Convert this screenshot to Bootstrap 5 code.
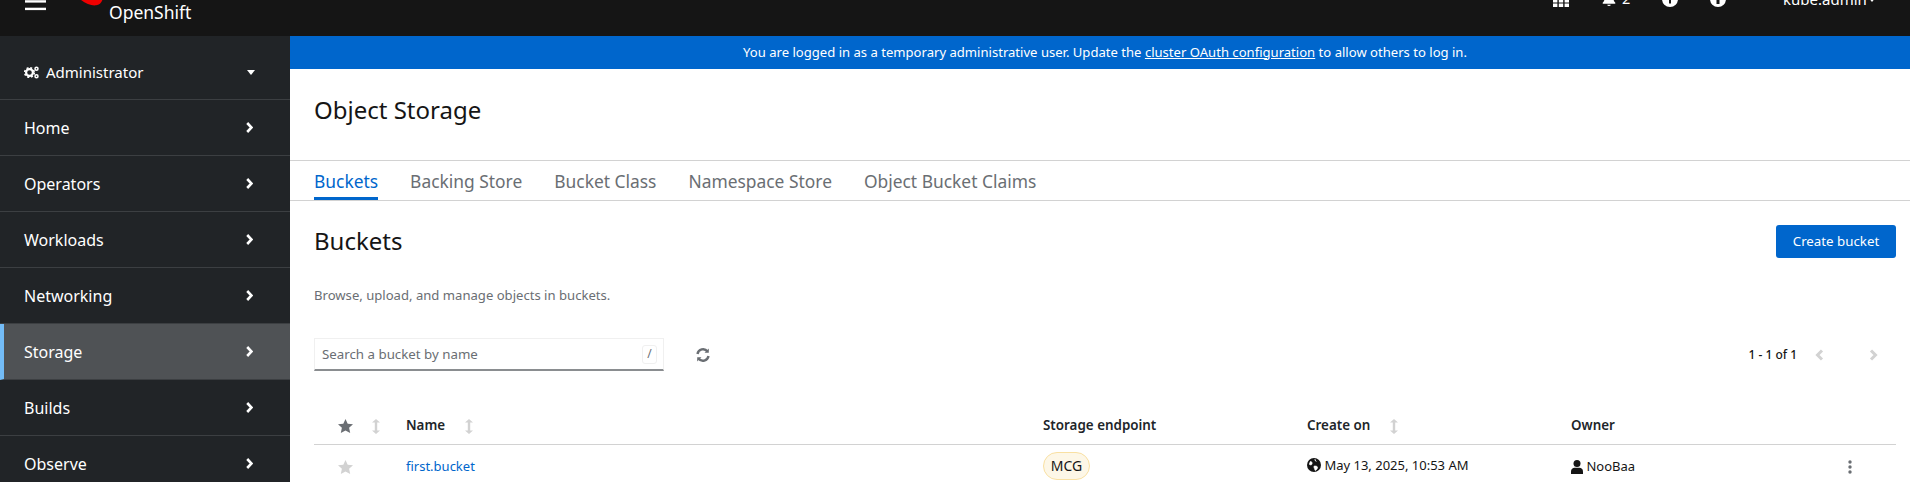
<!DOCTYPE html>
<html lang="en"><head><meta charset="utf-8"><title>Object Storage</title>
<link href="https://cdn.jsdelivr.net/npm/bootstrap@5.3.0/dist/css/bootstrap.min.css" rel="stylesheet">
<style>
html,body{height:482px;overflow:hidden}
body{font-family:"Noto Sans","Open Sans",sans-serif;font-size:14px;color:#151515;background:#fff}
.mast{height:36px;background:#151515;overflow:hidden;color:#fff}
.mast-in{height:76px;margin-top:-39px;padding-right:34px}
.burger{margin-left:25px;width:21px;height:100%;flex:none}
.rh{margin-left:32px;width:26px;flex:none}
.os-name{font-size:17.5px;line-height:20px;margin-left:5px;margin-top:41px;width:82px;white-space:nowrap}
.mast-tools{font-size:14.5px}
.tool{width:16px;height:16px;fill:#fff;flex:none}
.tool-bell{width:14px;margin-left:33px}
.tool-gap{margin-left:32px}
.bell-n{margin-left:6px;width:8px}
.user-n{margin-left:57px;font-size:15px;line-height:20px;width:80px;white-space:nowrap}
.user-c{margin-left:5px;width:8px;height:5px;fill:#fff}
.layout{height:446px}
.side{width:290px;background:#212427;flex:none;overflow:hidden}
.pers{height:64px;flex:none;padding:9px 24px 0;border-bottom:1px solid #3c3f42;color:#fff;font-size:15px}
.pers-ic{margin-right:7px}
.side-link{height:56px;flex:none;padding:0 24px;border-bottom:1px solid #3c3f42;color:#fff;font-size:16px;text-decoration:none}
.side-link:hover{color:#fff}
.side-link.is-on{background:#4f5255;border-left:4px solid #73bcf7;padding-left:20px}
.chev{width:7px;height:11px;margin-right:13px;fill:none;stroke:#fff;stroke-width:2.6}
.caret-s{width:8px;height:5px;fill:#fff;margin-right:11px}
.content{min-width:0;background:#fff}
.banner{height:33px;background:#06c;color:#fff;font-size:13.08px;padding-left:10px}
.banner a{color:#fff}
.title-bar{height:92px;padding:0 24px 8px;border-bottom:1px solid #d2d2d2;font-size:24px;font-weight:400;margin:0}
.tabs-row{height:40px;padding:0 24px;border-bottom:1px solid #d2d2d2;gap:32px;font-size:17.4px}
.tab-x{color:#6a6e73;text-decoration:none;height:39px;padding-top:2px}
.tab-x.is-on{color:#06c;border-bottom:3px solid #06c;padding-top:5px}
.list-pad{padding:0 14px 0 24px}
.head-row{height:33px;margin-top:24px}
.head-row h2{font-size:24px;font-weight:400;margin:0}
.btn-make{background:#06c;border:0;border-radius:3px;height:33px;width:120px;font-size:13.3px;padding:0;color:#fff}
.descr{font-size:13.1px;color:#6a6e73;margin:27px 0 0;line-height:20px}
.tools-row{margin-top:33px;height:33px}
.searchbox{width:350px;height:33px;border:1px solid #f0f0f0;border-bottom:2px solid #8a8d90;padding:0 6px 0 7px}
.searchbox span.ph{font-size:13.3px;color:#6a6e73;padding-top:2px}
.kbd-hint{width:15px;height:19px;border:1px solid #f0f0f0;border-radius:3px;font-size:12px;color:#6a6e73}
.refresh{width:14px;height:14px;margin-left:32px;fill:none;stroke:#6a6e73;stroke-width:2.4}
.pager{font-size:12px;font-weight:500}
.pg-ch{width:9px;height:12px;fill:none;stroke:#d2d2d2;stroke-width:3}
.pg-prev{margin-left:18px}
.pg-next{margin:0 18px 0 45px}
.grid-t{table-layout:fixed;width:1582px;margin:37px 0 0;font-size:13px;border-collapse:collapse}
.grid-t th{height:36px;font-weight:600;font-size:13.4px;padding:0 0 2px;border-bottom:1px solid #d2d2d2;vertical-align:middle}
.grid-t td{height:44px;padding:0;vertical-align:middle;border:0;color:#151515}
.c1{width:92px}.c2{width:637px}.c3,.c4,.c5{width:264px}.c6{width:61px}
.first-pad{padding-left:24px!important}
.star{width:15px;height:14px}
.sort-i{width:8px;height:15px;fill:#d2d2d2;margin-left:20px}
.sort-first{margin-left:19px}
.bkt{color:#06c;text-decoration:none;font-size:13px}
.mcg{background:#fdf7e7;border:1px solid #f9e0a2;color:#151515;font-size:14px;font-weight:400;padding:0;width:47px;height:28px;line-height:26px;display:inline-block;text-align:center;border-radius:14px}
.ic-d{width:14px;height:14px;fill:#151515}
.ic-up{margin-bottom:4px}
.ic-p{width:12px}
.kebab{width:4px;height:14px;fill:#6a6e73;margin-left:13px}
</style></head><body>
<header class="mast"><div class="mast-in d-flex align-items-center position-relative">
  <svg class="burger" viewBox="0 0 21 76"><rect y="31.700" width="21" height="2.400" fill="#fff"/><rect y="39.200" width="21" height="2.400" fill="#fff"/><rect y="46.700" width="21" height="2.400" fill="#fff"/></svg>
  <div class="d-flex align-items-start align-self-stretch">
    <svg class="rh" width="26" height="76" viewBox="0 0 26 76"><path d="M0 36C5 42 13 45 18 44.300 22 43.800 24.500 41 25 36Z" fill="#e00"/></svg>
    <div class="os-name">OpenShift</div>
  </div>
  <div class="ms-auto d-flex align-items-center mast-tools">
    <svg class="tool" viewBox="0 -1.400 16 16"><path d="M0 2h4.400v3.400H0zM5.800 2h4.400v3.400H5.800zM11.600 2H16v3.400h-4.400zM0 6.600h4.400V10H0zM5.800 6.600h4.400V10H5.800zM11.600 6.600H16V10h-4.400zM0 11.200h4.400v3.400H0zM5.800 11.200h4.400v3.400H5.800zM11.600 11.200H16v3.400h-4.400z"/></svg>
    <svg class="tool tool-bell" viewBox="0 0 16 16"><path d="M8 0a1 1 0 0 1 1 1v.6c2.600.5 4 2.600 4 5 0 3 .8 4.200 2.200 5.600.4.500.1 1.200-.6 1.200H1.400c-.7 0-1-.7-.6-1.200C2.200 10.800 3 9.600 3 6.600c0-2.400 1.400-4.500 4-5V1a1 1 0 0 1 1-1zM6 14.600h4a2 1.400 0 0 1-4 0z"/></svg>
    <span class="bell-n">2</span>
    <svg class="tool tool-gap" viewBox="0 0 16 16"><path fill-rule="evenodd" d="M8 0a8 8 0 1 1 0 16A8 8 0 0 1 8 0zM7 3.500v3.500H3.500v2H7v3.500h2V9h3.500V7H9V3.500z"/></svg>
    <svg class="tool tool-gap" viewBox="0 0 16 16"><path fill-rule="evenodd" d="M8 0a8 8 0 1 1 0 16A8 8 0 0 1 8 0zM6.500 3v2.500h3V3zM6.500 7v6h3V7z"/></svg>
    <span class="user-n">kube:admin</span>
    <svg class="user-c" viewBox="0 0 8 5"><path d="M0 0h8L4 5z"/></svg>
  </div>
</div></header>
<div class="layout d-flex">
  <nav class="side d-flex flex-column">
    <div class="pers d-flex align-items-center">
      <svg class="pers-ic" width="15" height="13" viewBox="0 0 15 13"><circle cx="5.500" cy="6.500" r="3.400" fill="none" stroke="#fff" stroke-width="2.200"/><circle cx="5.500" cy="6.500" r="4.800" fill="none" stroke="#fff" stroke-width="1.600" stroke-dasharray="2 1.800"/><circle cx="12.500" cy="2.700" r="1.500" fill="none" stroke="#fff" stroke-width="1.500"/><circle cx="12.500" cy="10.300" r="1.500" fill="none" stroke="#fff" stroke-width="1.500"/></svg>
      <span>Administrator</span>
      <svg class="caret-s ms-auto" viewBox="0 0 8 5"><path d="M0 0h8L4 5z"/></svg>
    </div>
    <a class="side-link d-flex align-items-center" href="#"><span>Home</span><svg class="chev ms-auto" viewBox="0 0 7 11"><path d="M1.200 1 5.500 5.500 1.200 10"/></svg></a>
    <a class="side-link d-flex align-items-center" href="#"><span>Operators</span><svg class="chev ms-auto" viewBox="0 0 7 11"><path d="M1.200 1 5.500 5.500 1.200 10"/></svg></a>
    <a class="side-link d-flex align-items-center" href="#"><span>Workloads</span><svg class="chev ms-auto" viewBox="0 0 7 11"><path d="M1.200 1 5.500 5.500 1.200 10"/></svg></a>
    <a class="side-link d-flex align-items-center" href="#"><span>Networking</span><svg class="chev ms-auto" viewBox="0 0 7 11"><path d="M1.200 1 5.500 5.500 1.200 10"/></svg></a>
    <a class="side-link is-on d-flex align-items-center" href="#"><span>Storage</span><svg class="chev ms-auto" viewBox="0 0 7 11"><path d="M1.200 1 5.500 5.500 1.200 10"/></svg></a>
    <a class="side-link d-flex align-items-center" href="#"><span>Builds</span><svg class="chev ms-auto" viewBox="0 0 7 11"><path d="M1.200 1 5.500 5.500 1.200 10"/></svg></a>
    <a class="side-link d-flex align-items-center" href="#"><span>Observe</span><svg class="chev ms-auto" viewBox="0 0 7 11"><path d="M1.200 1 5.500 5.500 1.200 10"/></svg></a>
  </nav>
  <main class="content flex-grow-1">
    <div class="banner d-flex align-items-center justify-content-center"><span>You are logged in as a temporary administrative user. Update the <a href="#">cluster OAuth configuration</a> to allow others to log in.</span></div>
    <h1 class="title-bar d-flex align-items-center">Object Storage</h1>
    <div class="tabs-row d-flex">
      <a class="tab-x is-on d-flex align-items-center" href="#">Buckets</a>
      <a class="tab-x d-flex align-items-center" href="#">Backing Store</a>
      <a class="tab-x d-flex align-items-center" href="#">Bucket Class</a>
      <a class="tab-x d-flex align-items-center" href="#">Namespace Store</a>
      <a class="tab-x d-flex align-items-center" href="#">Object Bucket Claims</a>
    </div>
    <div class="list-pad">
      <div class="head-row d-flex justify-content-between align-items-center">
        <h2>Buckets</h2>
        <button class="btn btn-primary btn-make" type="button">Create bucket</button>
      </div>
      <p class="descr">Browse, upload, and manage objects in buckets.</p>
      <div class="tools-row d-flex align-items-center">
        <div class="searchbox d-flex align-items-center justify-content-between"><span class="ph">Search a bucket by name</span><span class="kbd-hint d-flex align-items-center justify-content-center">/</span></div>
        <svg class="refresh" viewBox="0 0 14 14"><path d="M1.500 6A5.600 5.600 0 0 1 11.500 3.500M12.500 8A5.600 5.600 0 0 1 2.500 10.500"/><path d="M12.800 .5v4.300H8.500zM1.200 13.500V9.200h4.300z" fill="#6a6e73" stroke="none"/></svg>
        <div class="ms-auto d-flex align-items-center pager"><span>1 - 1 of 1</span>
          <svg class="pg-ch pg-prev" viewBox="0 0 9 12"><path d="M7 1.500 2.500 6 7 10.500"/></svg>
          <svg class="pg-ch pg-next" viewBox="0 0 9 12"><path d="M2 1.500 6.500 6 2 10.500"/></svg>
        </div>
      </div>
      <table class="table grid-t">
        <colgroup><col class="c1"><col class="c2"><col class="c3"><col class="c4"><col class="c5"><col class="c6"></colgroup>
        <thead><tr>
          <th class="first-pad"><svg class="star" viewBox="0 0 15 14"><path d="M7.500 0l2.200 4.700 5.300.6-3.900 3.500 1.100 5.200-4.700-2.600-4.700 2.600 1.100-5.200L0 5.300l5.300-.6z" fill="#6a6e73"/></svg><svg class="sort-i sort-first" viewBox="0 0 8 15"><path d="M4 0l4 3.500H5.200v8H8L4 15 0 11.500h2.800v-8H0z"/></svg></th>
          <th>Name<svg class="sort-i" viewBox="0 0 8 15"><path d="M4 0l4 3.500H5.200v8H8L4 15 0 11.500h2.800v-8H0z"/></svg></th>
          <th>Storage endpoint</th>
          <th>Create on<svg class="sort-i" viewBox="0 0 8 15"><path d="M4 0l4 3.500H5.200v8H8L4 15 0 11.500h2.800v-8H0z"/></svg></th>
          <th>Owner</th><th></th>
        </tr></thead>
        <tbody><tr>
          <td class="first-pad"><svg class="star" viewBox="0 0 15 14"><path d="M7.500 0l2.200 4.700 5.300.6-3.900 3.500 1.100 5.200-4.700-2.600-4.700 2.600 1.100-5.200L0 5.300l5.300-.6z" fill="#d2d2d2"/></svg></td>
          <td><a class="bkt" href="#">first.bucket</a></td>
          <td><span class="mcg">MCG</span></td>
          <td><svg class="ic-d ic-up" viewBox="0 0 14 14"><circle cx="7" cy="7" r="7"/><path d="M3 3.500c2 0 2.500 1 2 2.500S3 7 2 6M8 1c-.5 1.500.5 2 1.500 2.500M8 8c1.500 0 3 .5 2.500 2s-1.500 2-2 2.500-1-2-1.500-3 0-1.500 1-1.500z" fill="#fff" stroke="#fff" stroke-width=".6"/></svg> May 13, 2025, 10:53 AM</td>
          <td><svg class="ic-d ic-p" viewBox="0 0 12 14"><circle cx="6" cy="3.500" r="3.500"/><path d="M0 14v-2.500C0 9 1.800 7.800 3.500 7.800h5c1.700 0 3.500 1.200 3.500 3.700V14z"/></svg> NooBaa</td>
          <td><svg class="kebab" viewBox="0 0 4 14"><circle cx="2" cy="2" r="1.700"/><circle cx="2" cy="7" r="1.700"/><circle cx="2" cy="12" r="1.700"/></svg></td>
        </tr></tbody>
      </table>
    </div>
  </main>
</div>
</body></html>
